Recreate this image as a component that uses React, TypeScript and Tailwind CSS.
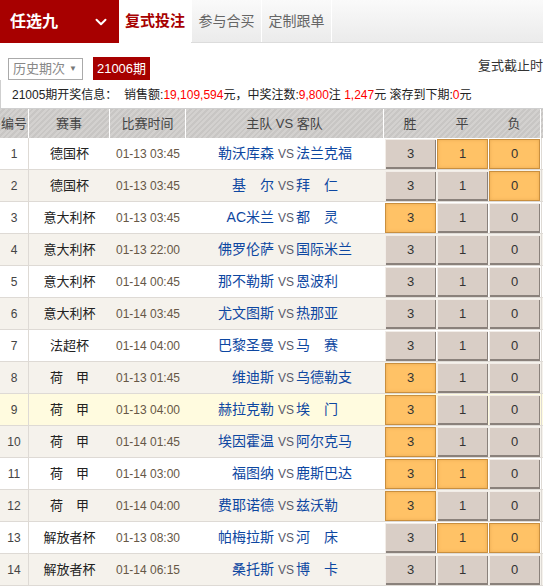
import { ChevronDown } from "lucide-react";

interface Jogo {
    no: number;
    liga: string;
    hora: string;
    casa: string;
    fora: string;
    picks: boolean[];
}

const JOGOS: Jogo[] = [
    { no: 1, liga: "德国杯", hora: "01-13 03:45", casa: "勒沃库森", fora: "法兰克福", picks: [false, true, true] },
    { no: 2, liga: "德国杯", hora: "01-13 03:45", casa: "基　尔", fora: "拜　仁", picks: [false, false, true] },
    { no: 3, liga: "意大利杯", hora: "01-13 03:45", casa: "AC米兰", fora: "都　灵", picks: [true, false, false] },
    { no: 4, liga: "意大利杯", hora: "01-13 22:00", casa: "佛罗伦萨", fora: "国际米兰", picks: [false, false, false] },
    { no: 5, liga: "意大利杯", hora: "01-14 00:45", casa: "那不勒斯", fora: "恩波利", picks: [false, false, false] },
    { no: 6, liga: "意大利杯", hora: "01-14 03:45", casa: "尤文图斯", fora: "热那亚", picks: [false, false, false] },
    { no: 7, liga: "法超杯", hora: "01-14 04:00", casa: "巴黎圣曼", fora: "马　赛", picks: [false, false, false] },
    { no: 8, liga: "荷　甲", hora: "01-13 01:45", casa: "维迪斯", fora: "乌德勒支", picks: [true, false, false] },
    { no: 9, liga: "荷　甲", hora: "01-13 04:00", casa: "赫拉克勒", fora: "埃　门", picks: [true, false, false] },
    { no: 10, liga: "荷　甲", hora: "01-14 01:45", casa: "埃因霍温", fora: "阿尔克马", picks: [true, false, false] },
    { no: 11, liga: "荷　甲", hora: "01-14 03:00", casa: "福图纳", fora: "鹿斯巴达", picks: [true, true, false] },
    { no: 12, liga: "荷　甲", hora: "01-14 04:00", casa: "费耶诺德", fora: "兹沃勒", picks: [true, false, false] },
    { no: 13, liga: "解放者杯", hora: "01-13 08:30", casa: "帕梅拉斯", fora: "河　床", picks: [false, true, true] },
    { no: 14, liga: "解放者杯", hora: "01-14 06:15", casa: "桑托斯", fora: "博　卡", picks: [false, false, false] },
];

const RESULTADOS = ["3", "1", "0"];

export default function App() {
    /************** RENDER **************/

    return (
        <div className="h-[587px] w-[543px] overflow-hidden bg-white font-['Liberation_Sans','Noto_Sans_CJK_SC',sans-serif] text-[#333]">
            {/* topo */}
            <div className="flex h-[43px] w-[620px] border-b border-[#dcdcdc] bg-gradient-to-b from-[#fafafa] to-[#ebebeb]">
                <div className="flex h-[43px] w-[119px] items-center justify-between bg-[#a70000] pl-[10px] pr-[9px]">
                    <span className="text-[16px] font-bold text-white">任选九</span>
                    <ChevronDown className="h-[18px] w-[18px] text-white" strokeWidth={2.6} />
                </div>
                <div className="flex h-[43px] w-[72px] items-center justify-center bg-white text-[15px] font-bold text-[#a70000]">
                    复式投注
                </div>
                <div className="flex w-[70px] items-center justify-center border-l border-white text-[14px] text-[#666]">
                    参与合买
                </div>
                <div className="flex w-[71px] items-center justify-center border-x border-white text-[14px] text-[#666]">
                    定制跟单
                </div>
            </div>

            {/* filtros */}
            <div className="flex h-[37px] items-end pl-[8px]">
                <div className="flex h-[22px] w-[75px] items-center justify-between border border-[#aaa] pl-[4px] pr-[5px] text-[13px] text-[#888]">
                    <span>历史期次</span>
                    <span className="text-[8px] text-[#777]">▼</span>
                </div>
                <div className="ml-[10px] flex h-[23px] w-[57px] items-center justify-center bg-[#a70000] text-[13px] text-white">
                    21006期
                </div>
                <div className="mb-[5px] ml-auto w-[65px] overflow-hidden whitespace-nowrap text-[13px]">
                    复式截止时间：01-12 22:00
                </div>
            </div>

            <div className="flex h-[29px] items-center whitespace-nowrap border-b border-l border-[#cfcfcf] pl-[11px] pt-[2px] text-[12px] text-[#222]">
                21005期开奖信息：&nbsp; 销售额:<span className="text-[#f00]">19,109,594</span>元，中奖注数:
                <span className="text-[#f00]">9,800</span>注&nbsp;<span className="text-[#f00]">1,247</span>元 滚存到下期:
                <span className="text-[#f00]">0</span>元
            </div>

            {/* tabela */}
            <div className="w-[620px]">
                <div className="grid h-[29px] grid-cols-[29px_81px_76px_198px_157px_1fr] bg-[repeating-linear-gradient(135deg,#d3d1cf_0px,#d3d1cf_2px,#c8c6c4_2px,#c8c6c4_4px)] text-[13px] text-[#444]">
                    <div className="flex items-center justify-center border-r border-white">编号</div>
                    <div className="flex items-center justify-center border-r border-white">赛事</div>
                    <div className="flex items-center justify-center border-r border-white">比赛时间</div>
                    <div className="flex items-center justify-center border-r border-white">主队 VS 客队</div>
                    <div className="flex items-center border-r border-white">
                        <span className="w-[52px] text-center">胜</span>
                        <span className="w-[52px] text-center">平</span>
                        <span className="w-[52px] text-center">负</span>
                    </div>
                    <div />
                </div>

                {JOGOS.map((j) => (
                    <div
                        key={j.no}
                        className={
                            j.no === 9
                                ? "grid h-[32px] grid-cols-[29px_81px_76px_198px_157px_1fr] border-b border-[#dedad5] bg-[#fffbdf]"
                                : j.no % 2 === 0
                                ? "grid h-[32px] grid-cols-[29px_81px_76px_198px_157px_1fr] border-b border-[#dedad5] bg-[#f5f2ec]"
                                : "grid h-[32px] grid-cols-[29px_81px_76px_198px_157px_1fr] border-b border-[#dedad5] bg-white"
                        }
                    >
                        <div className="flex items-center justify-center border-r border-[#dedad5] text-[12px] text-[#444]">{j.no}</div>
                        <div className="flex items-center justify-center text-[13px] text-[#222]">{j.liga}</div>
                        <div className="flex items-center justify-center text-[12px] text-[#665746]">{j.hora}</div>
                        <div className="flex items-center whitespace-nowrap">
                            <span className="w-[88px] text-right text-[14px] text-[#0d47a1]">{j.casa}</span>
                            <span className="ml-[4px] mr-[2px] text-[12px] text-[#5a5a6a]">VS</span>
                            <span className="text-[14px] text-[#0d47a1]">{j.fora}</span>
                        </div>
                        <div className="flex items-center gap-[1px] pl-[1px]">
                            {RESULTADOS.map((r, i) => (
                                <div
                                    key={r}
                                    className={
                                        j.picks[i]
                                            ? "flex h-[30px] w-[51px] items-center justify-center bg-[#ffc266] text-[13px] text-[#333] shadow-[inset_0_0_0_1px_#c98f3f,inset_0_0_4px_#e0a04a]"
                                            : "flex h-[30px] w-[51px] items-center justify-center bg-[#d9cec6] text-[13px] text-[#333] shadow-[inset_1px_1px_0_#f2ede8,inset_-1px_-2px_0_#8a817b]"
                                    }
                                >
                                    {r}
                                </div>
                            ))}
                        </div>
                        <div className="border-l border-[#dedad5]" />
                    </div>
                ))}
            </div>
        </div>
    );
}
